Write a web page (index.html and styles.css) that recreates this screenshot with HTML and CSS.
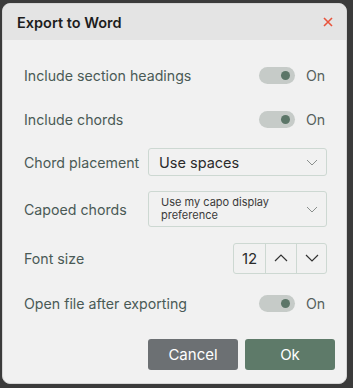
FILE: index.html
```html
<!DOCTYPE html>
<html lang="en">
<head>
    <meta charset="UTF-8">
    <meta name="viewport" content="width=device-width, initial-scale=1.0">
    <title>Export to Word</title>
    <link rel="stylesheet" href="styles.css">
</head>
<body>
    <div class="dialog">
        <div class="dialog-header">
            <h1>Export to Word</h1>
            <button class="close-button" aria-label="Close">
                <svg width="10" height="10" viewBox="0 0 10 10">
                    <path d="M1 1 L9 9 M9 1 L1 9" stroke="#e8543c" stroke-width="1.6" fill="none"/>
                </svg>
            </button>
        </div>
        <div class="dialog-body">
            <div class="row">
                <span class="label">Include section headings</span>
                <div class="switch-group">
                    <span class="switch"><span class="knob"></span></span>
                    <span class="switch-text">On</span>
                </div>
            </div>
            <div class="row">
                <span class="label">Include chords</span>
                <div class="switch-group">
                    <span class="switch"><span class="knob"></span></span>
                    <span class="switch-text">On</span>
                </div>
            </div>
            <div class="row">
                <span class="label">Chord placement</span>
                <div class="select">
                    <span class="select-text">Use spaces</span>
                    <svg class="chevron" width="12" height="7" viewBox="0 0 12 7">
                        <path d="M1 1 L6 6 L11 1" stroke="#8a8f8d" stroke-width="1" fill="none"/>
                    </svg>
                </div>
            </div>
            <div class="row">
                <span class="label">Capoed chords</span>
                <div class="select select-tall">
                    <span class="select-text small">Use my capo display preference</span>
                    <svg class="chevron" width="12" height="7" viewBox="0 0 12 7">
                        <path d="M1 1 L6 6 L11 1" stroke="#8a8f8d" stroke-width="1" fill="none"/>
                    </svg>
                </div>
            </div>
            <div class="row">
                <span class="label">Font size</span>
                <div class="stepper">
                    <span class="stepper-value">12</span>
                    <button class="stepper-btn" aria-label="Increase">
                        <svg width="14" height="8" viewBox="0 0 14 8">
                            <path d="M1 7 L7 1 L13 7" stroke="#333" stroke-width="1.2" fill="none"/>
                        </svg>
                    </button>
                    <button class="stepper-btn" aria-label="Decrease">
                        <svg width="14" height="8" viewBox="0 0 14 8">
                            <path d="M1 1 L7 7 L13 1" stroke="#333" stroke-width="1.2" fill="none"/>
                        </svg>
                    </button>
                </div>
            </div>
            <div class="row">
                <span class="label">Open file after exporting</span>
                <div class="switch-group">
                    <span class="switch"><span class="knob"></span></span>
                    <span class="switch-text">On</span>
                </div>
            </div>
        </div>
        <div class="dialog-footer">
            <button class="btn btn-cancel">Cancel</button>
            <button class="btn btn-ok">Ok</button>
        </div>
    </div>
</body>
</html>
```

FILE: styles.css
```css
body {
    font-family: Inter, "Noto Sans", sans-serif;
    background-color: #3b3b3b;
    margin: 0;
    padding: 3px 0 0 2px;
    height: 388px;
    box-sizing: border-box;
    overflow: hidden;
}

.dialog {
    width: 345px;
    height: 381px;
    background-color: #f1f1f1;
    border: 1px solid #d6d6d6;
    border-radius: 8px;
    box-sizing: border-box;
    overflow: hidden;
    display: flex;
    flex-direction: column;
}

.dialog-header {
    height: 36px;
    background-color: #e4e4e4;
    display: flex;
    align-items: center;
    justify-content: space-between;
    padding: 0 10px 0 14px;
    flex-shrink: 0;
}

.dialog-header h1 {
    margin: 0;
    font-size: 14.5px;
    font-weight: 600;
    color: #1d1d1d;
}

.close-button {
    border: none;
    background: none;
    padding: 0;
    width: 16px;
    height: 16px;
    display: flex;
    align-items: center;
    justify-content: center;
    cursor: pointer;
}

.dialog-body {
    display: grid;
    grid-template-rows: 44px 44px 42px 52px 46px 44px;
    padding: 13px 19px 0 21px;
}

.row {
    display: flex;
    align-items: center;
    justify-content: space-between;
}

.label {
    font-size: 14.2px;
    color: #4a5a56;
}

.switch-group {
    display: flex;
    align-items: center;
    gap: 11px;
}

.switch {
    width: 36px;
    height: 17px;
    border-radius: 9px;
    background-color: #c6cbc8;
    display: flex;
    align-items: center;
    justify-content: flex-end;
    padding-right: 5px;
    box-sizing: border-box;
}

.knob {
    width: 9px;
    height: 9px;
    border-radius: 50%;
    background-color: #5c7668;
}

.switch-text {
    font-size: 14.2px;
    color: #55605c;
    width: 21px;
}

.select {
    width: 179px;
    height: 28px;
    border: 1px solid #cdd8d2;
    border-radius: 3px;
    box-sizing: border-box;
    display: flex;
    align-items: center;
    justify-content: space-between;
    padding: 0 8px 0 10px;
}

.select-tall {
    height: 36px;
    padding-left: 12px;
}

.select-text {
    font-size: 14.5px;
    color: #2b2b2b;
}

.select-text.small {
    font-size: 11px;
    line-height: 13px;
    width: 120px;
    color: #3a3a3a;
}

.stepper {
    display: flex;
    height: 31px;
    border: 1px solid #cdd8d2;
    border-radius: 3px;
    box-sizing: border-box;
}

.stepper-value {
    width: 31px;
    display: flex;
    align-items: center;
    justify-content: center;
    font-size: 15px;
    color: #2b2b2b;
    border-right: 1px solid #cdd8d2;
}

.stepper-btn {
    width: 30px;
    border: none;
    background: none;
    padding: 0;
    display: flex;
    align-items: center;
    justify-content: center;
    cursor: pointer;
}

.stepper-btn + .stepper-btn {
    border-left: 1px solid #cdd8d2;
}

.dialog-footer {
    display: flex;
    justify-content: flex-end;
    gap: 7px;
    padding: 14px 11px 0 0;
}

.btn {
    width: 90px;
    height: 31px;
    border: none;
    border-radius: 3px;
    color: #fff;
    font-family: Inter, "Noto Sans", sans-serif;
    font-size: 15px;
    cursor: pointer;
}

.btn-cancel {
    background-color: #6c7073;
}

.btn-ok {
    background-color: #5e7a69;
}
```
